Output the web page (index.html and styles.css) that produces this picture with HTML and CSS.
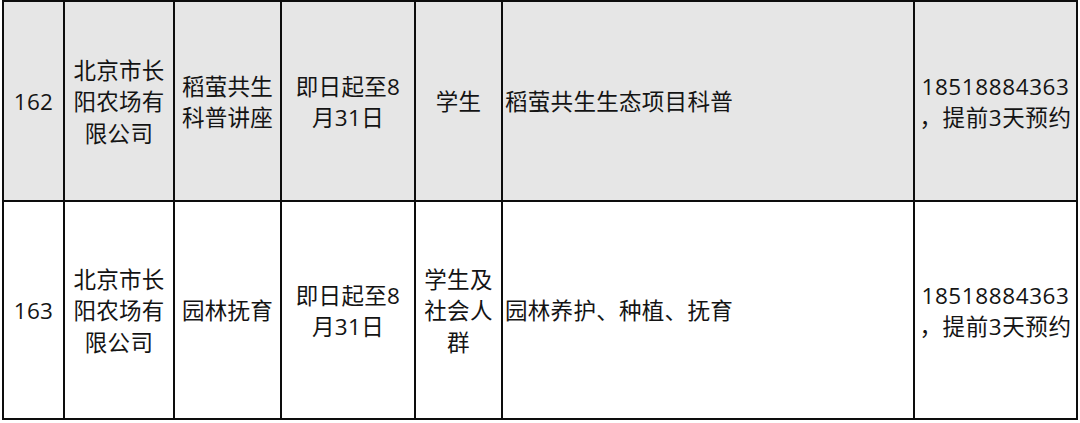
FILE: index.html
```html
<!DOCTYPE html>
<html lang="zh-CN">
<head>
<meta charset="utf-8">
<link rel="stylesheet" href="styles.css">
</head>
<body>
<div class="sheet">
  <div class="cell shade c1">162</div>
  <div class="cell shade c2">北京市长<br>阳农场有<br>限公司</div>
  <div class="cell shade c3">稻萤共生<br>科普讲座</div>
  <div class="cell shade c4">即日起至8<br>月31日</div>
  <div class="cell shade c5">学生</div>
  <div class="cell shade c6 left">稻萤共生生态项目科普</div>
  <div class="cell shade c7">18518884363<br>，提前3天预约</div>

  <div class="cell c1">163</div>
  <div class="cell c2">北京市长<br>阳农场有<br>限公司</div>
  <div class="cell c3">园林抚育</div>
  <div class="cell c4">即日起至8<br>月31日</div>
  <div class="cell c5">学生及<br>社会人<br>群</div>
  <div class="cell c6 left">园林养护、种植、抚育</div>
  <div class="cell c7">18518884363<br>，提前3天预约</div>
</div>
</body>
</html>
```

FILE: styles.css
```css
html, body {
  margin: 0;
  padding: 0;
  background: #ffffff;
}

.sheet {
  display: grid;
  grid-template-columns: 61px 110px 107px 134px 87px 412px 163px;
  grid-template-rows: 200px 218px;
  width: 1076px;
  margin-left: 2px;
  border-left: 2px solid #0d0d0d;
  border-top: 2px solid #0d0d0d;
  box-sizing: border-box;
  font-family: "Open Sans", "Noto Sans CJK SC", sans-serif;
  font-size: 22.5px;
  line-height: 31.5px;
  letter-spacing: 0.3px;
  color: #141414;
}

.cell {
  box-sizing: border-box;
  border-right: 2px solid #0d0d0d;
  border-bottom: 2px solid #0d0d0d;
  display: flex;
  align-items: center;
  justify-content: center;
  text-align: center;
  white-space: nowrap;
  overflow: hidden;
  padding-top: 2px;
}

.c7 {
  letter-spacing: 0.6px;
}

.shade {
  background: #e6e6e6;
}

.left {
  justify-content: flex-start;
  text-align: left;
  padding-left: 2px;
}
```
